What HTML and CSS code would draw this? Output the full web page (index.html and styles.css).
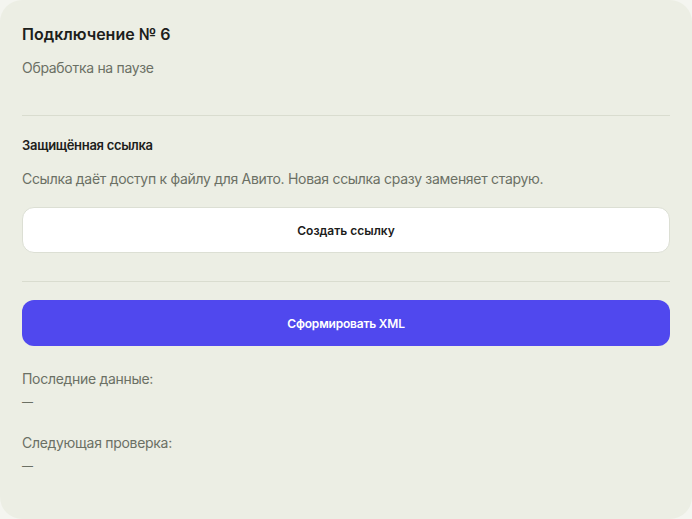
FILE: index.html
```html
<!DOCTYPE html>
<html lang="ru">
<head>
<meta charset="utf-8">
<title>Подключение № 6</title>
<link rel="stylesheet" href="styles.css">
</head>
<body>
<div class="card">
  <h1 class="title">Подключение № 6</h1>
  <p class="status">Обработка на паузе</p>
  <hr class="divider divider-top">
  <h2 class="section-title">Защищённая ссылка</h2>
  <p class="section-text">Ссылка даёт доступ к файлу для Авито. Новая ссылка сразу заменяет старую.</p>
  <button class="btn btn-light" type="button">Создать ссылку</button>
  <hr class="divider divider-mid">
  <button class="btn btn-primary" type="button">Сформировать XML</button>
  <div class="meta">
    <div class="meta-item">
      <div class="meta-label">Последние данные:</div>
      <div class="meta-value">—</div>
    </div>
    <div class="meta-item">
      <div class="meta-label">Следующая проверка:</div>
      <div class="meta-value">—</div>
    </div>
  </div>
</div>
</body>
</html>
```
FILE: styles.css
```css
html, body {
  margin: 0;
  padding: 0;
  background: #f4f5f0;
}
body {
  font-family: Inter, "Noto Sans", sans-serif;
  color: #1f231e;
}
.card {
  box-sizing: border-box;
  min-height: 519px;
  background: #eceee4;
  border-radius: 22px;
  padding: 22px 22px 30px;
  display: flex;
  flex-direction: column;
}
.title {
  margin: 0;
  font-size: 16px;
  line-height: 24px;
  font-weight: 600;
  color: #1c201b;
}
.status {
  margin: 12px 0 0;
  font-size: 14px;
  line-height: 20px;
  letter-spacing: -0.3px;
  color: #6b7064;
}
.divider {
  border: 0;
  border-top: 1px solid #d9dccf;
  margin: 0;
  height: 0;
}
.divider-top { margin-top: 37px; }
.section-title {
  margin: 20px 0 0;
  font-size: 13px;
  line-height: 18px;
  font-weight: 600;
  letter-spacing: -0.3px;
  color: #1c201b;
}
.section-text {
  margin: 15px 0 0;
  font-size: 14px;
  line-height: 20px;
  letter-spacing: -0.3px;
  color: #6b7064;
}
.btn {
  display: block;
  width: 100%;
  height: 46px;
  border-radius: 12px;
  font-family: inherit;
  font-size: 12px;
  font-weight: 600;
  cursor: pointer;
}
.btn-light {
  margin-top: 18px;
  background: #ffffff;
  border: 1px solid #dcdfd4;
  color: #1c201b;
}
.divider-mid { margin-top: 28px; }
.btn-primary {
  margin-top: 18px;
  background: #5048ee;
  border: 0;
  color: #ffffff;
  letter-spacing: -0.2px;
}
.meta {
  margin-top: 23px;
  display: flex;
  flex-direction: column;
  gap: 21px;
}
.meta-item {
  display: flex;
  flex-direction: column;
  gap: 3px;
}
.meta-label {
  font-size: 14px;
  line-height: 20px;
  letter-spacing: -0.3px;
  color: #6b7064;
}
.meta-value {
  font-size: 11px;
  line-height: 20px;
  color: #6b7064;
}
```
